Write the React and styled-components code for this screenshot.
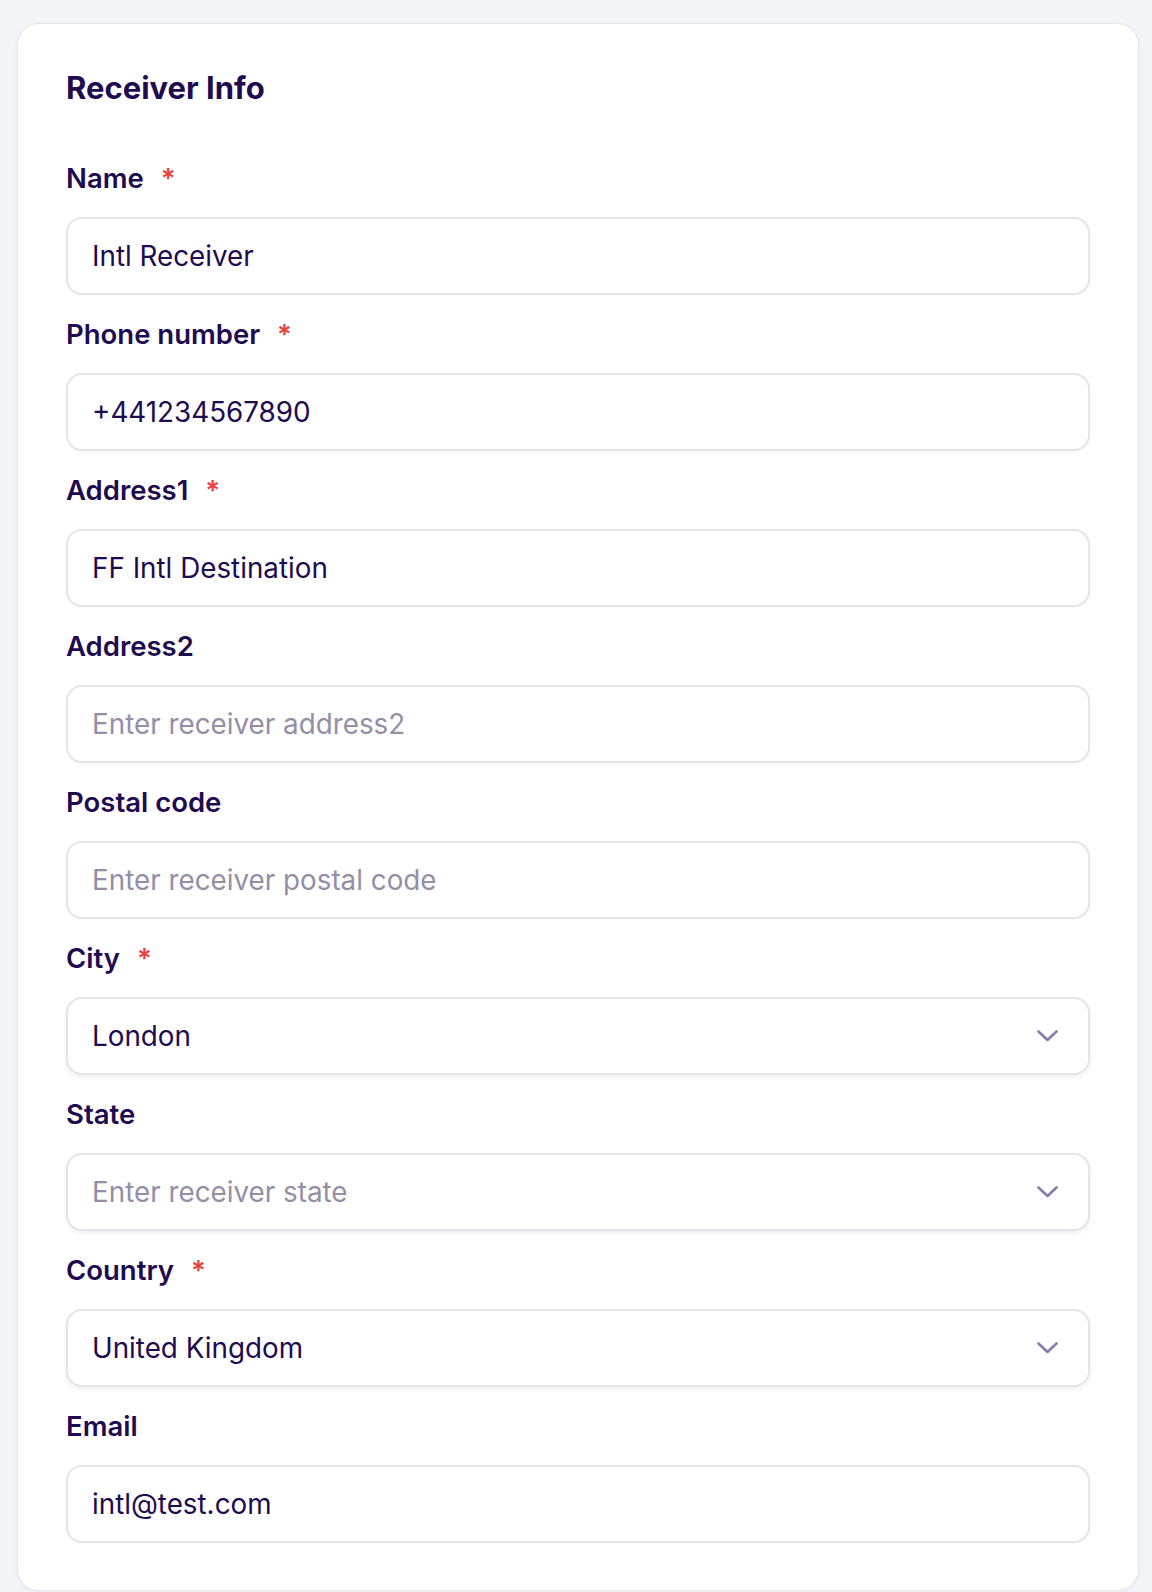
import React from "react";
import styled, { createGlobalStyle } from "styled-components";

const GlobalStyle = createGlobalStyle`
  html, body {
    margin: 0;
    padding: 0;
    background: #f4f5f9;
  }
  body {
    font-family: Inter, "Noto Sans", sans-serif;
    color: #1f0b50;
  }
  * {
    box-sizing: border-box;
  }
`;

const fields = [
  { label: "Name", required: true, value: "Intl Receiver" },
  { label: "Phone number", required: true, value: "+441234567890" },
  { label: "Address1", required: true, value: "FF Intl Destination" },
  { label: "Address2", placeholder: "Enter receiver address2" },
  { label: "Postal code", placeholder: "Enter receiver postal code" },
  { label: "City", required: true, value: "London", select: true },
  { label: "State", placeholder: "Enter receiver state", select: true },
  { label: "Country", required: true, value: "United Kingdom", select: true },
  { label: "Email", value: "intl@test.com" },
];

const Chevron = () => (
  <svg width="21" height="12" viewBox="0 0 21 12" fill="none">
    <path
      d="M1.5 1.5L10.5 10L19.5 1.5"
      stroke="#8a7aae"
      strokeWidth="2.6"
      strokeLinecap="round"
      strokeLinejoin="round"
    />
  </svg>
);

const App = () => {
  return (
    <Page>
      <GlobalStyle />
      <Card>
        <Title>Receiver Info</Title>
        <Form>
          {fields.map((f) => (
            <Field key={f.label}>
              <Label>
                {f.label}
                {f.required && <Star>*</Star>}
              </Label>
              {f.select ? (
                <SelectBox>
                  <SelectText $empty={!f.value}>{f.value || f.placeholder}</SelectText>
                  <Chevron />
                </SelectBox>
              ) : (
                <Input readOnly value={f.value || ""} placeholder={f.placeholder} />
              )}
            </Field>
          ))}
        </Form>
      </Card>
    </Page>
  );
};

const Page = styled.div`
  padding: 23px 13px 2px 17px;
`;

const Card = styled.div`
  background: #ffffff;
  border: 1px solid #e6e6eb;
  border-radius: 22px;
  box-shadow: 0 2px 6px rgba(30, 20, 70, 0.05);
  padding: 46px 48px 47px 48px;
`;

const Title = styled.h2`
  margin: 0 0 54px 0;
  font-size: 31px;
  line-height: 36px;
  font-weight: 700;
  color: #1f0b50;
`;

const Form = styled.div`
  display: flex;
  flex-direction: column;
  gap: 21px;
`;

const Field = styled.div`
  display: flex;
  flex-direction: column;
  gap: 21px;
`;

const Label = styled.label`
  font-size: 27.5px;
  line-height: 36px;
  font-weight: 600;
  color: #1f0b50;
`;

const Star = styled.span`
  color: #e8423f;
  margin-left: 17px;
`;

const boxStyles = `
  width: 100%;
  height: 78px;
  border: 2px solid #e5e5e9;
  border-radius: 16px;
  background: #ffffff;
  padding: 0 30px 0 24px;
  font-family: Inter, "Noto Sans", sans-serif;
  font-size: 27.8px;
  font-weight: 400;
  color: #1f0b50;
`;

const Input = styled.input`
  ${boxStyles}
  box-shadow: 0 1px 3px rgba(30, 20, 70, 0.04);
  outline: none;
  &::placeholder {
    color: #958ea6;
  }
`;

const SelectBox = styled.div`
  ${boxStyles}
  display: flex;
  align-items: center;
  justify-content: space-between;
  box-shadow: 0 2px 5px rgba(30, 20, 70, 0.08);
`;

const SelectText = styled.span`
  color: ${(p) => (p.$empty ? "#958ea6" : "#1f0b50")};
`;

export default App;
